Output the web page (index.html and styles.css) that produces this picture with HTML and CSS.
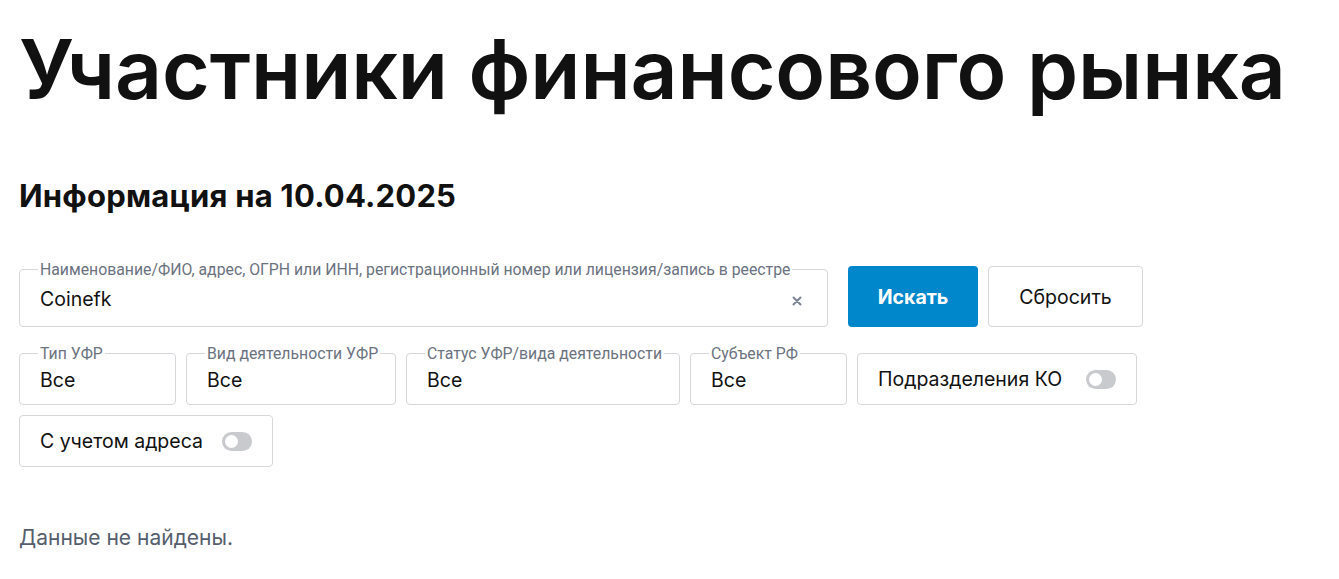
FILE: index.html
```html
<!DOCTYPE html>
<html lang="ru">
<head>
    <meta charset="UTF-8">
    <meta name="viewport" content="width=device-width, initial-scale=1.0">
    <title>Участники финансового рынка</title>
    <link rel="stylesheet" href="styles.css">
</head>
<body>
    <h1 class="page-title">Участники финансового рынка</h1>
    <h2 class="info-date">Информация на 10.04.2025</h2>

    <form class="search-form">
        <div class="search-row">
            <fieldset class="field field-search">
                <legend>Наименование/ФИО, адрес, ОГРН или ИНН, регистрационный номер или лицензия/запись в реестре</legend>
                <span class="field-value">Coinefk</span>
                <span class="clear-btn">
                    <svg width="10" height="10" viewBox="0 0 10 10"><path d="M1.5 1.5 L8.5 8.5 M8.5 1.5 L1.5 8.5" stroke="#7c8595" stroke-width="2" stroke-linecap="round"/></svg>
                </span>
            </fieldset>
            <button type="button" class="btn btn-primary">Искать</button>
            <button type="button" class="btn btn-reset">Сбросить</button>
        </div>

        <div class="filter-row">
            <fieldset class="field field-type">
                <legend>Тип УФР</legend>
                <span class="field-value">Все</span>
            </fieldset>
            <fieldset class="field field-activity">
                <legend>Вид деятельности УФР</legend>
                <span class="field-value">Все</span>
            </fieldset>
            <fieldset class="field field-status">
                <legend>Статус УФР/вида деятельности</legend>
                <span class="field-value">Все</span>
            </fieldset>
            <fieldset class="field field-region">
                <legend>Субъект РФ</legend>
                <span class="field-value">Все</span>
            </fieldset>
            <div class="toggle-box toggle-ko">
                <span>Подразделения КО</span>
                <span class="toggle"></span>
            </div>
        </div>

        <div class="filter-row">
            <div class="toggle-box toggle-address">
                <span>С учетом адреса</span>
                <span class="toggle"></span>
            </div>
        </div>
    </form>

    <p class="empty">Данные не найдены.</p>
</body>
</html>
```

FILE: styles.css
```css
body {
    margin: 0;
    padding: 0 19px;
    font-family: Inter, "Noto Sans", sans-serif;
    color: #111;
    background: #fff;
}
.page-title {
    margin: 20px 0 0;
    font-size: 82px;
    font-weight: 600;
    line-height: 100px;
    letter-spacing: -0.1px;
}
.info-date {
    margin: 58px 0 0;
    font-size: 31px;
    font-weight: 700;
    line-height: 36px;
    letter-spacing: 0.2px;
}
.search-form {
    margin-top: 49px;
}
.search-row {
    display: flex;
    align-items: flex-end;
    gap: 10px;
}
.filter-row {
    display: flex;
    align-items: flex-end;
    gap: 10px;
    margin-top: 10px;
}
.search-row + .filter-row {
    margin-top: 20px;
}
.field {
    position: relative;
    box-sizing: border-box;
    min-width: 0;
    margin: 0;
    padding: 0 20px;
    height: 64px;
    border: 1px solid #d5d7db;
    border-radius: 4px;
    display: flex;
    align-items: center;
}
.field legend {
    padding: 0 2px;
    margin-left: -2px;
    font-family: Roboto, "Noto Sans", sans-serif;
    font-size: 15.8px;
    line-height: 13px;
    color: #6b7280;
    white-space: nowrap;
}
.field-value {
    font-size: 19.5px;
    margin-top: -4px;
}
.field-search {
    width: 809px;
}
.clear-btn {
    position: absolute;
    right: 25px;
    top: 14px;
}
.filter-row .field {
    height: 58px;
}
.field-type { width: 157px; }
.field-activity { width: 210px; }
.field-status { width: 274px; }
.field-region { width: 157px; }
.btn {
    height: 61px;
    border-radius: 4px;
    font-family: Inter, "Noto Sans", sans-serif;
    font-size: 19.5px;
    cursor: pointer;
}
.btn-primary {
    width: 130px;
    margin-left: 10px;
    border: none;
    background: #0086cb;
    color: #fff;
    font-weight: 700;
}
.btn-reset {
    width: 155px;
    background: #fff;
    border: 1px solid #d5d7db;
    color: #111;
}
.toggle-box {
    box-sizing: border-box;
    height: 52px;
    padding: 0 20px;
    border: 1px solid #d5d7db;
    border-radius: 4px;
    display: flex;
    align-items: center;
    justify-content: space-between;
    font-size: 19.5px;
}
.toggle-ko { width: 280px; }
.toggle-address { width: 254px; }
.toggle {
    position: relative;
    width: 30px;
    height: 19px;
    border-radius: 10px;
    background: #c8cacd;
}
.toggle::after {
    content: "";
    position: absolute;
    left: 3px;
    top: 3px;
    width: 13px;
    height: 13px;
    border-radius: 50%;
    background: #fff;
}
.empty {
    margin: 58px 0 0;
    font-size: 21px;
    color: #555e6c;
}
```
